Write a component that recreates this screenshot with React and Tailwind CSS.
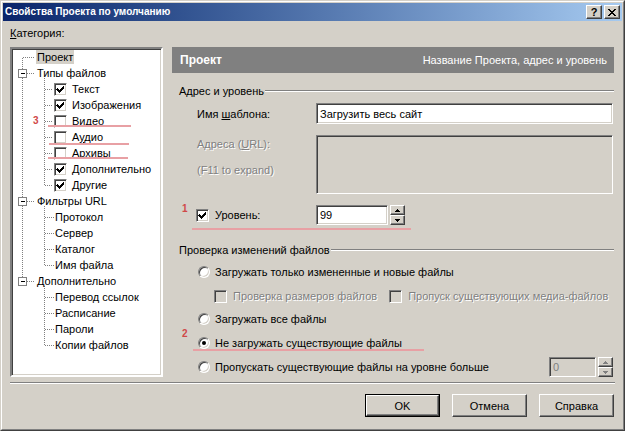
import React from "react";

const RAISED =
  "border border-t-white border-l-white border-r-[#404040] border-b-[#404040] shadow-[inset_-1px_-1px_0_#808080]";
const SUNKEN =
  "border border-t-[#808080] border-l-[#808080] border-r-white border-b-white shadow-[inset_1px_1px_0_#404040,inset_-1px_-1px_0_#d4d0c8]";
const DIS = "text-[#808080] [text-shadow:1px_1px_0_#ffffff]";

function Check({ checked, disabled }) {
  return (
    <div
      className={`w-[13px] h-[13px] shrink-0 flex items-center justify-center ${SUNKEN} ${
        disabled ? "bg-[#d4d0c8]" : "bg-white"
      }`}
    >
      {checked && (
        <svg width="9" height="9" viewBox="0 0 9 9" shapeRendering="crispEdges">
          <path d="M1 3h1v1h1v1h1v-1h1v-1h1v-1h1v-1h1v3h-1v1h-1v1h-1v1h-1v1h-1v-1h-1v-1h-1v-1h-1z" fill="#000" />
        </svg>
      )}
    </div>
  );
}

function Radio({ checked }) {
  return (
    <div className="w-[12px] h-[12px] shrink-0 rounded-full bg-white border border-t-[#808080] border-l-[#808080] border-r-white border-b-white shadow-[inset_1px_1px_0_#404040,inset_-1px_-1px_0_#d4d0c8] flex items-center justify-center">
      {checked && <div className="w-[4px] h-[4px] rounded-full bg-black" />}
    </div>
  );
}

function SpinBtn({ up, disabled }) {
  return (
    <div className={`h-[10px] w-[15px] bg-[#d4d0c8] flex items-center justify-center ${RAISED}`}>
      <svg width="5" height="3" viewBox="0 0 5 3" shapeRendering="crispEdges">
        {up ? (
          <path d="M2 0h1v1h1v1h1v1h-5v-1h1v-1h1z" fill={disabled ? "#808080" : "#000"} />
        ) : (
          <path d="M0 0h5v1h-1v1h-1v1h-1v-1h-1v-1h-1z" fill={disabled ? "#808080" : "#000"} />
        )}
      </svg>
    </div>
  );
}

function Spin({ disabled }) {
  return (
    <div className="flex flex-col ml-[2px] h-[20px]">
      <SpinBtn up disabled={disabled} />
      <SpinBtn disabled={disabled} />
    </div>
  );
}

function GroupLabel({ children }) {
  return (
    <div className="flex items-center h-[14px] pl-[7px]">
      <span className="whitespace-nowrap pr-[1px]">{children}</span>
      <div className="flex-1 h-[2px] border-t border-t-[#808080] border-b border-b-white" />
    </div>
  );
}

function Btn({ children, def }) {
  const inner = (
    <div className={`h-full w-full flex items-center justify-center bg-[#d4d0c8] ${RAISED}`}>{children}</div>
  );
  return def ? (
    <div className="w-[75px] h-[23px] border border-black">{inner}</div>
  ) : (
    <div className="w-[75px] h-[23px]">{inner}</div>
  );
}

const tree = [
  { l: 0, t: "Проект", sel: true },
  { l: 0, t: "Типы файлов", exp: true },
  { l: 1, t: "Текст", cb: true, c: true },
  { l: 1, t: "Изображения", cb: true, c: true },
  { l: 1, t: "Видео", cb: true },
  { l: 1, t: "Аудио", cb: true, u: 1 },
  { l: 1, t: "Архивы", cb: true },
  { l: 1, t: "Дополнительно", cb: true, c: true },
  { l: 1, t: "Другие", cb: true, c: true },
  { l: 0, t: "Фильтры URL", exp: true },
  { l: 1, t: "Протокол" },
  { l: 1, t: "Сервер" },
  { l: 1, t: "Каталог" },
  { l: 1, t: "Имя файла" },
  { l: 0, t: "Дополнительно", exp: true },
  { l: 1, t: "Перевод ссылок" },
  { l: 1, t: "Расписание" },
  { l: 1, t: "Пароли" },
  { l: 1, t: "Копии файлов" },
];

function TreeLines() {
  const cy = (i) => 8.5 + 16 * i;
  const els = [];
  els.push(<line key="v0" x1="10.5" y1={cy(0)} x2="10.5" y2={cy(14)} />);
  const groups = [
    [1, 8],
    [9, 13],
    [14, 18],
  ];
  groups.forEach(([a, b], k) =>
    els.push(<line key={"v1" + k} x1="32.5" y1={cy(a) + 4} x2="32.5" y2={cy(b)} />)
  );
  tree.forEach((r, i) => {
    if (r.l === 0) {
      els.push(<line key={"h" + i} x1={r.exp ? 15 : 10.5} y1={cy(i)} x2="23" y2={cy(i)} />);
    } else {
      els.push(<line key={"h" + i} x1="32.5" y1={cy(i)} x2={r.cb ? 41 : 42} y2={cy(i)} />);
    }
  });
  const boxes = [1, 9, 14].map((i) => (
    <g key={"b" + i}>
      <rect x="6.5" y={cy(i) - 4} width="8" height="8" fill="#fff" stroke="#808080" />
      <line x1="8.5" y1={cy(i)} x2="13" y2={cy(i)} stroke="#000" />
    </g>
  ));
  return (
    <svg className="absolute left-0 top-0" width="149" height="326" shapeRendering="crispEdges">
      <g stroke="#808080" strokeDasharray="1 1" fill="none">
        {els}
      </g>
      {boxes}
    </svg>
  );
}

export default function App() {
  return (
    <div className="w-[625px] h-[431px] bg-[#d4d0c8] relative overflow-hidden font-['Tahoma','Liberation_Sans',Arial,sans-serif] text-[11px] text-black leading-[14px] border border-t-[#d4d0c8] border-l-[#d4d0c8] border-r-[#404040] border-b-[#404040]">
      <div className="h-full w-full border border-t-white border-l-white border-r-[#808080] border-b-[#808080] p-[1px] flex flex-col">
        {/* title bar */}
        <div className="h-[18px] shrink-0 flex items-center bg-gradient-to-r from-[#0a246a] to-[#a6caf0] pl-[2px] pr-[2px]">
          <span className="text-white font-bold text-[10px]">Свойства Проекта по умолчанию</span>
          <div className="ml-auto flex items-center">
            <div className={`w-[16px] h-[14px] bg-[#d4d0c8] flex items-center justify-center ${RAISED}`}>
              <span className="font-bold text-[11px] leading-[11px] font-['Liberation_Sans',Arial,sans-serif]">?</span>
            </div>
            <div className={`ml-[2px] w-[16px] h-[14px] bg-[#d4d0c8] flex items-center justify-center ${RAISED}`}>
              <svg width="8" height="7" viewBox="0 0 8 7" shapeRendering="crispEdges">
                <path d="M0 0h2v1h1v1h2v-1h1v-1h2v1h-1v1h-1v1h-1v1h1v1h1v1h1v1h-2v-1h-1v-1h-2v1h-1v1h-2v-1h1v-1h1v-1h1v-1h-1v-1h-1v-1h-1z" fill="#000" />
              </svg>
            </div>
          </div>
        </div>

        {/* content */}
        <div className="flex-1 flex flex-col pl-[7px] pr-[7px]">
          <div className="h-[26px] pt-[5px] shrink-0">
            <span>
              <span className="underline underline-offset-[1px]">К</span>атегория:
            </span>
          </div>

          <div className="flex h-[330px] shrink-0">
            {/* tree */}
            <div className="w-[153px] h-full bg-white relative border-2 border-t-[#808080] border-l-[#808080] border-r-white border-b-white shadow-[inset_1px_1px_0_#404040,inset_-1px_-1px_0_#d4d0c8]">
              <TreeLines />
              <div className="relative flex flex-col">
                {tree.map((r, i) => (
                  <div key={i} className="h-[16px] flex items-center whitespace-nowrap">
                    {r.l === 0 ? (
                      <span className={`ml-[24px] px-[1px] h-[14px] ${r.sel ? "bg-[#d4d0c8]" : ""}`}>{r.t}</span>
                    ) : r.cb ? (
                      <>
                        <div className="ml-[42px]">
                          <Check checked={r.c} />
                        </div>
                        <span className="ml-[5px]">
                          {r.u ? (
                            <>
                              А<span className="underline underline-offset-[1px]">у</span>дио
                            </>
                          ) : (
                            r.t
                          )}
                        </span>
                      </>
                    ) : (
                      <span className="ml-[42px] px-[1px]">{r.t}</span>
                    )}
                  </div>
                ))}
              </div>
            </div>

            {/* right panel */}
            <div className="w-[442px] ml-[9px] flex flex-col">
              <div className="h-[26px] bg-[#808080] text-white flex items-center pl-[8px] pr-[7px] shrink-0">
                <span className="font-bold text-[12px]">Проект</span>
                <span className="ml-auto">Название Проекта, адрес и уровень</span>
              </div>

              <div className="mt-[11px]">
                <GroupLabel>Адрес и уровень</GroupLabel>
              </div>

              <div className="mt-[5px] h-[21px] flex items-center pl-[25px] pr-[1px]">
                <span className="w-[119px] shrink-0">
                  Имя <span className="underline underline-offset-[1px]">ш</span>аблона:
                </span>
                <div className={`flex-1 h-full bg-white flex items-center px-[3px] ${SUNKEN}`}>Загрузить весь сайт</div>
              </div>

              <div className="mt-[11px] h-[59px] flex pl-[25px] pr-[1px]">
                <div className={`w-[119px] shrink-0 flex flex-col pt-[2px] ${DIS}`}>
                  <span>
                    Адреса (<span className="underline underline-offset-[1px]">U</span>RL):
                  </span>
                  <span className="mt-[12px]">(F11 to expand)</span>
                </div>
                <div className={`flex-1 h-full bg-[#d4d0c8] ${SUNKEN}`} />
              </div>

              <div className="mt-[11px] h-[20px] flex items-center pl-[24px]">
                <div className="w-[120px] flex items-center shrink-0">
                  <Check checked />
                  <span className="ml-[6px]">Уровень:</span>
                </div>
                <div className={`w-[72px] h-full bg-white flex items-center px-[3px] ${SUNKEN}`}>99</div>
                <Spin />
              </div>

              <div className="mt-[18px]">
                <GroupLabel>Проверка изменений файлов</GroupLabel>
              </div>

              <div className="mt-[7px] h-[16px] flex items-center pl-[26px]">
                <Radio />
                <span className="ml-[5px]">Загружать только измененные и новые файлы</span>
              </div>

              <div className="mt-[8px] h-[16px] flex items-center pl-[42px] whitespace-nowrap">
                <Check disabled />
                <span className={`ml-[6px] ${DIS}`}>Проверка размеров файлов</span>
                <div className="ml-[12px]">
                  <Check disabled />
                </div>
                <span className={`ml-[6px] ${DIS}`}>Пропуск существующих медиа-файлов</span>
              </div>

              <div className="mt-[7px] h-[16px] flex items-center pl-[26px]">
                <Radio />
                <span className="ml-[5px]">Загружать все файлы</span>
              </div>

              <div className="mt-[8px] h-[16px] flex items-center pl-[26px]">
                <Radio checked />
                <span className="ml-[5px]">Не загружать существующие файлы</span>
              </div>

              <div className="mt-[6px] h-[20px] flex items-center pl-[26px] pr-[1px]">
                <Radio />
                <span className="ml-[5px]">Пропускать существующие файлы на уровне больше</span>
                <div className={`ml-auto w-[47px] h-full bg-[#d4d0c8] flex items-center px-[3px] text-[#808080] ${SUNKEN}`}>
                  0
                </div>
                <Spin disabled />
              </div>
            </div>
          </div>

          <div className="mt-[5px] h-[2px] border-t border-t-[#808080] border-b border-b-white shrink-0" />

          <div className="mt-[10px] flex justify-end gap-[12px] pr-[1px]">
            <Btn def>OK</Btn>
            <Btn>Отмена</Btn>
            <Btn>Справка</Btn>
          </div>
        </div>
      </div>

      {/* red annotations */}
      <span className="absolute left-[32px] top-[114px] leading-[12px] text-[#d04848] font-bold text-[10px] font-['Liberation_Sans',Arial,sans-serif]">3</span>
      <div className="absolute left-[47px] top-[124px] w-[83px] h-[2px] bg-[#e8a0a4]" />
      <div className="absolute left-[48px] top-[142px] w-[80px] h-[2px] bg-[#e8a0a4]" />
      <div className="absolute left-[47px] top-[156px] w-[80px] h-[2px] bg-[#e8a0a4]" />
      <span className="absolute left-[181px] top-[202px] leading-[12px] text-[#d04848] font-bold text-[10px] font-['Liberation_Sans',Arial,sans-serif]">1</span>
      <div className="absolute left-[191px] top-[227px] w-[219px] h-[2px] bg-[#e8a0a4]" />
      <span className="absolute left-[181px] top-[327px] leading-[12px] text-[#d04848] font-bold text-[10px] font-['Liberation_Sans',Arial,sans-serif]">2</span>
      <div className="absolute left-[192px] top-[348px] w-[231px] h-[2px] bg-[#e8a0a4]" />
    </div>
  );
}
